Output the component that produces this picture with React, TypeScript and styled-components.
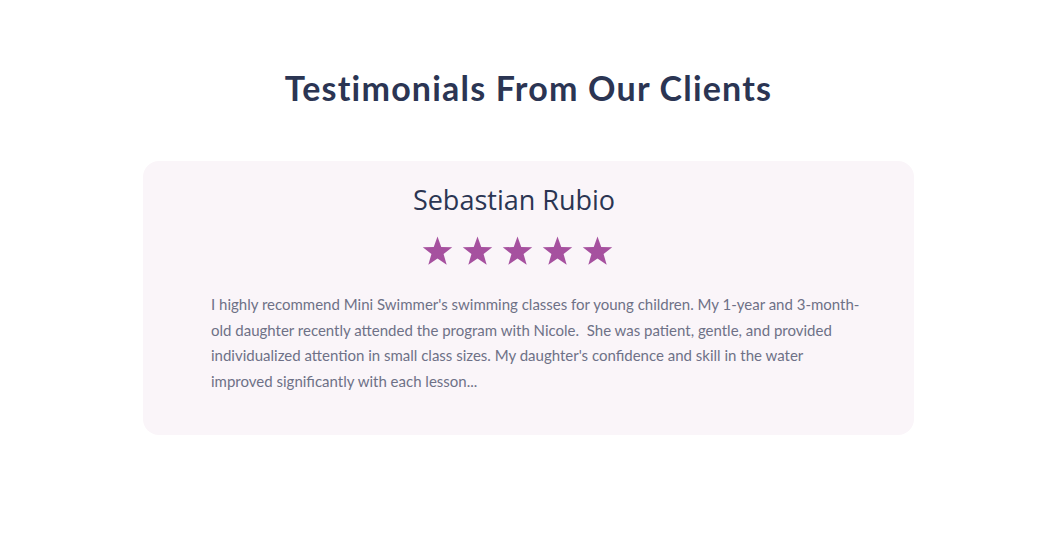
import React from "react";
import styled, { createGlobalStyle } from "styled-components";

const Global = createGlobalStyle`
  html, body { margin: 0; padding: 0; background: #ffffff; }
  body { font-family: "Lato", "Noto Sans", sans-serif; }
`;

const Section = styled.section`
  width: 1057px;
  height: 548px;
  display: flex;
  flex-direction: column;
  align-items: center;
  padding-top: 66px;
  box-sizing: border-box;
`;

const Heading = styled.h2`
  margin: 0;
  font-family: "Lato", sans-serif;
  font-weight: 700;
  font-size: 34px;
  line-height: 44px;
  color: #2b3553;
  letter-spacing: 1.2px;
`;

const Card = styled.article`
  margin-top: 51px;
  width: 771px;
  height: 274px;
  box-sizing: border-box;
  background: #faf5f9;
  border-radius: 16px;
  padding: 20px 40px 0 68px;
  display: flex;
  flex-direction: column;
  align-items: center;
`;

const Name = styled.h3`
  margin: 0 0 0 -57px;
  font-family: "Open Sans", sans-serif;
  font-weight: 400;
  font-size: 27px;
  line-height: 38px;
  color: #2b3553;
`;

const Stars = styled.div`
  display: flex;
  gap: 9px;
  margin: 17px 0 0 -50px;
`;

const Quote = styled.p`
  align-self: stretch;
  margin: 26px 0 0;
  font-family: "Lato", sans-serif;
  font-size: 15px;
  line-height: 25.6px;
  color: #6e7187;
`;

const Star = () => (
  <svg width="31" height="30" viewBox="0 0 24 23" aria-hidden="true">
    <polygon
      fill="#a6519f"
      points="12,0.3 14.9,8.4 23.4,8.6 16.7,13.9 19.1,22.2 12,17.3 4.9,22.2 7.3,13.9 0.6,8.6 9.1,8.4"
    />
  </svg>
);

export default function App() {
  return (
    <>
      <Global />
      <Section>
        <Heading>Testimonials From Our Clients</Heading>
        <Card>
          <Name>Sebastian Rubio</Name>
          <Stars>
            {[0, 1, 2, 3, 4].map((i) => (
              <Star key={i} />
            ))}
          </Stars>
          <Quote>
            I highly recommend Mini Swimmer's swimming classes for young children. My 1-year and 3-month-
            <br />
            old daughter recently attended the program with Nicole.&nbsp; She was patient, gentle, and provided
            <br />
            individualized attention in small class sizes. My daughter's confidence and skill in the water
            <br />
            improved significantly with each lesson...
          </Quote>
        </Card>
      </Section>
    </>
  );
}
